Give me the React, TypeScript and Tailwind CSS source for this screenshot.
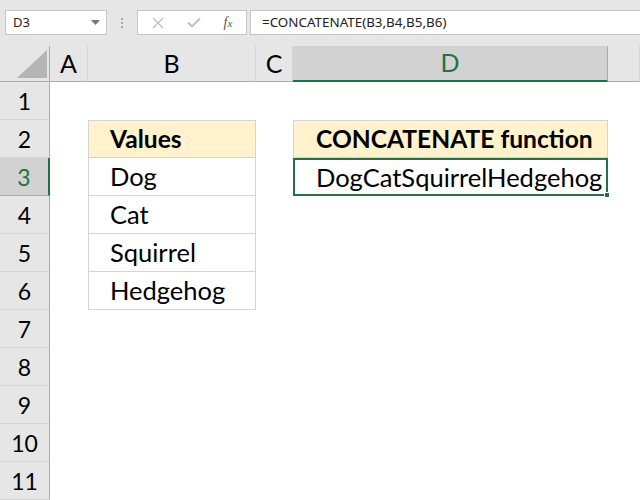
import React from "react";

const cols = [
  { key: "A", w: 38 },
  { key: "B", w: 168 },
  { key: "C", w: 37 },
  { key: "D", w: 315 },
  { key: "E", w: 32 },
];

const values = ["Dog", "Cat", "Squirrel", "Hedgehog"];

function FormulaBar() {
  return (
    <div className="flex h-[46px] items-start bg-[#e6e6e6] pt-[10px]" style={{ fontFamily: '"Noto Sans", sans-serif' }}>
      <div className="ml-[5px] flex h-[25px] w-[102px] items-center justify-between border border-[#c6c6c6] bg-white pl-[7px] pr-[6px] text-[13px] text-[#222]">
        <span>D3</span>
        <svg width="9" height="5" viewBox="0 0 9 5">
          <path d="M0 0 L9 0 L4.5 5 Z" fill="#777" />
        </svg>
      </div>
      <div className="flex h-[25px] w-[30px] flex-col items-center justify-center gap-[2px]">
        <span className="h-[2px] w-[2px] bg-[#a6a6a6]" />
        <span className="h-[2px] w-[2px] bg-[#a6a6a6]" />
        <span className="h-[2px] w-[2px] bg-[#a6a6a6]" />
      </div>
      <div className="flex h-[25px] w-[110px] items-center border border-[#c6c6c6] bg-white">
        <div className="flex w-[40px] justify-center">
          <svg width="12" height="12" viewBox="0 0 12 12">
            <path d="M1 1 L11 11 M11 1 L1 11" stroke="#bdbdbd" strokeWidth="1.2" />
          </svg>
        </div>
        <div className="flex w-[32px] justify-center">
          <svg width="14" height="11" viewBox="0 0 14 11">
            <path d="M1 5.5 L5 9.5 L13 1.5" stroke="#bdbdbd" strokeWidth="1.8" fill="none" />
          </svg>
        </div>
        <div className="flex w-[36px] justify-center">
          <span className="text-[14px] italic text-[#555]" style={{ fontFamily: '"Liberation Serif", serif' }}>
            f<span className="text-[11px]">x</span>
          </span>
        </div>
      </div>
      <div className="ml-[3px] flex h-[25px] flex-1 items-center border-y border-l border-[#c6c6c6] bg-white pl-[11px] text-[13.4px] text-[#222]">
        =CONCATENATE(B3,B4,B5,B6)
      </div>
    </div>
  );
}

function Cell({ r, c }: { r: number; c: string }) {
  const base = "flex items-center text-black";
  if (c === "B" && r >= 2 && r <= 6) {
    const top = r === 2 ? "border-t" : "";
    const bg = r === 2 ? "bg-[#fff2cc] font-bold text-[24.6px]" : "bg-white text-[25.5px]";
    return (
      <div className={`${base} ${top} ${bg} border-x border-b border-[#d4d4d4] pl-[21px]`}>
        {r === 2 ? "Values" : values[r - 3]}
      </div>
    );
  }
  if (c === "D" && r === 2) {
    return (
      <div className={`${base} border border-[#d4d4d4] bg-[#fff2cc] pl-[22px] text-[24.6px] font-bold`}>
        CONCATENATE function
      </div>
    );
  }
  if (c === "D" && r === 3) {
    return (
      <div className={`${base} relative border-2 border-[#217346] bg-white pl-[21px] text-[25.5px]`}>
        DogCatSquirrelHedgehog
        <span className="absolute bottom-[-4px] right-[-4px] h-[6px] w-[6px] border border-white bg-[#217346]" />
      </div>
    );
  }
  return <div className="bg-white" />;
}

export default function App() {
  const rows = Array.from({ length: 11 }, (_, i) => i + 1);
  return (
    <div className="h-[500px] w-[640px] overflow-hidden bg-white">
      <FormulaBar />
      <div style={{ fontFamily: "Lato, sans-serif" }}>
        <div className="grid grid-cols-[50px_38px_168px_37px_315px_32px] grid-rows-[36px_repeat(11,38px)]">
          <div className="relative border-b border-r border-[#ababab] bg-[#e6e6e6]">
            <svg className="absolute bottom-[3px] right-[2px]" width="30" height="28" viewBox="0 0 30 28">
              <path d="M30 0 L30 28 L0 28 Z" fill="#b5b5b5" />
            </svg>
          </div>
          {cols.map((c) =>
            c.key === "D" ? (
              <div
                key={c.key}
                className="flex items-center justify-center border-b-2 border-r border-b-[#217346] border-r-[#ababab] bg-[#d2d2d2] text-[25px] text-[#217346]"
              >
                D
              </div>
            ) : (
              <div
                key={c.key}
                className="flex items-center justify-center border-b border-r border-b-[#ababab] border-r-[#d4d4d4] bg-[#e6e6e6] text-[25px] text-black"
              >
                {c.key === "E" ? "" : c.key}
              </div>
            )
          )}
          {rows.map((r) => (
            <React.Fragment key={r}>
              {r === 3 ? (
                <div className="flex items-center justify-center border-b border-r-2 border-b-[#ababab] border-r-[#217346] bg-[#d2d2d2] pt-[2px] text-[23px] text-[#217346]">
                  3
                </div>
              ) : (
                <div className="flex items-center justify-center border-b border-r border-b-[#d4d4d4] border-r-[#ababab] bg-[#e6e6e6] pt-[2px] text-[23px] text-black">
                  {r}
                </div>
              )}
              {cols.map((c) => (
                <Cell key={c.key} r={r} c={c.key} />
              ))}
            </React.Fragment>
          ))}
        </div>
      </div>
    </div>
  );
}
